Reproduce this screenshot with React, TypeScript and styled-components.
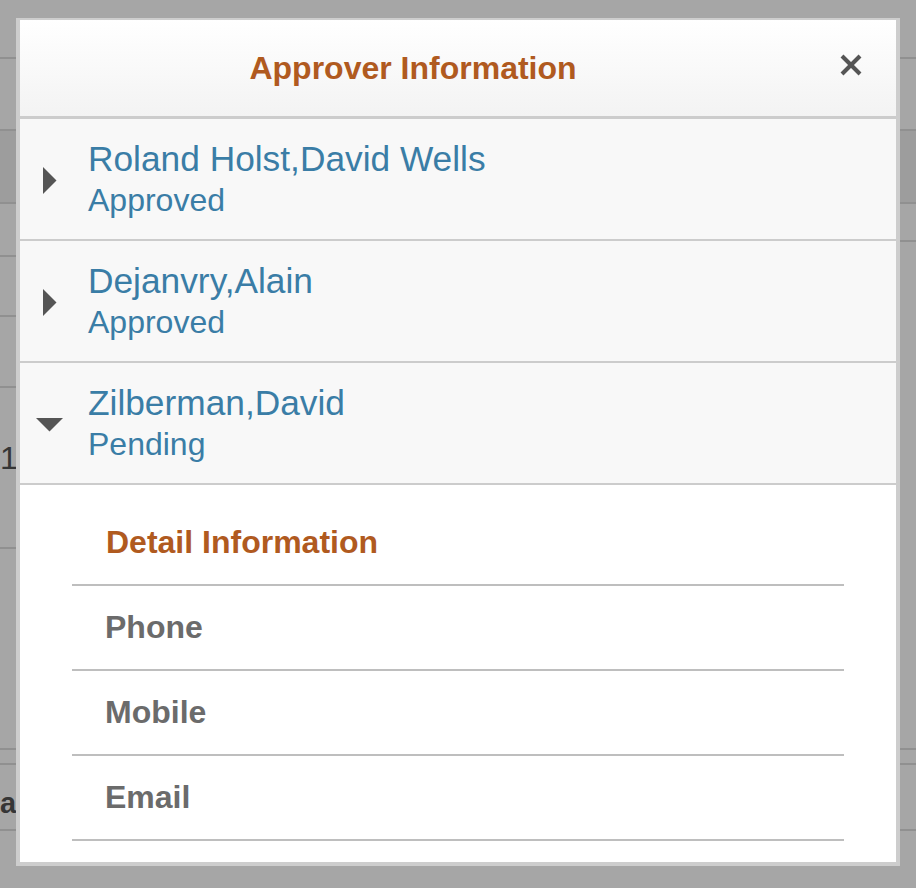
import React from "react";
import styled, { createGlobalStyle } from "styled-components";

const GlobalStyle = createGlobalStyle`
  html, body {
    margin: 0;
    padding: 0;
    background: #a6a6a6;
    font-family: "Liberation Sans", Arial, Helvetica, sans-serif;
  }
  * { box-sizing: border-box; }
`;

const Page = styled.div`
  position: relative;
  width: 916px;
  height: 888px;
  overflow: hidden;
  background: #a6a6a6;
`;

/* ---------- obscured page behind the overlay ---------- */
const Backdrop = styled.div`
  display: flex;
  flex-direction: column;
  width: 916px;
`;

const BgRow = styled.div<{ $h: number; $dark?: boolean; $noLine?: boolean; $pt?: number }>`
  height: ${(p) => p.$h}px;
  padding-top: ${(p) => p.$pt ?? 0}px;
  background: ${(p) => (p.$dark ? "#9d9d9d" : "transparent")};
  border-bottom: ${(p) => (p.$noLine ? "none" : "2px solid #909090")};
  display: flex;
  align-items: flex-start;
`;

const BgSplit = styled.div`
  display: grid;
  grid-template-columns: 458px 458px;
`;

const BgColumn = styled.div`
  display: flex;
  flex-direction: column;
`;

const BgCell = styled.div<{ $w: number; $bold?: boolean; $size: number }>`
  width: ${(p) => p.$w}px;
  text-align: right;
  white-space: nowrap;
  font-size: ${(p) => p.$size}px;
  line-height: 36px;
  font-weight: ${(p) => (p.$bold ? 700 : 400)};
  color: #363636;
`;

/* ---------- modal ---------- */
const Modal = styled.div`
  position: absolute;
  left: 16px;
  top: 18px;
  width: 884px;
  background: #ffffff;
  border-style: solid;
  border-color: #cdcdcd;
  border-width: 2px 4px 4px 4px;
  display: flex;
  flex-direction: column;
`;

const Header = styled.div`
  height: 99px;
  display: flex;
  align-items: center;
  background: linear-gradient(#ffffff, #f3f3f3);
  border-bottom: 3px solid #cccccc;
`;

const Title = styled.h1`
  flex: 1;
  margin: 0;
  text-align: center;
  font-size: 32px;
  line-height: 40px;
  font-weight: 700;
  color: #b05a1f;
`;

const CloseButton = styled.button`
  width: 90px;
  height: 40px;
  padding: 0 0 7px 0;
  border: none;
  background: transparent;
  display: flex;
  align-items: center;
  justify-content: center;
  cursor: pointer;
`;

const ApproverRow = styled.div`
  display: flex;
  align-items: center;
  padding: 19px 0 19px 16px;
  background: #f8f8f8;
  border-bottom: 2px solid #cccccc;
`;

const Toggle = styled.div`
  width: 27px;
  height: 27px;
  margin-right: 25px;
  margin-top: 3px;
  display: flex;
  align-items: center;
  justify-content: center;
`;

const ApproverText = styled.div`
  display: flex;
  flex-direction: column;
`;

const Name = styled.div`
  font-size: 35.3px;
  line-height: 42px;
  color: #3a7da6;
`;

const Status = styled.div`
  font-size: 32px;
  line-height: 40px;
  color: #3a7da6;
`;

const Detail = styled.div`
  padding: 37px 52px 21px 52px;
  background: #ffffff;
`;

const DetailHeading = styled.h2`
  margin: 0 0 22px 0;
  padding-left: 34px;
  font-size: 32px;
  line-height: 40px;
  font-weight: 700;
  color: #b05a1f;
`;

const FieldList = styled.div`
  border-top: 2px solid #bebebe;
  display: flex;
  flex-direction: column;
`;

const Field = styled.div`
  height: 85px;
  padding-left: 33px;
  border-bottom: 2px solid #bebebe;
  font-size: 32px;
  line-height: 83px;
  font-weight: 700;
  color: #6b6b6b;
`;

const RightTriangle = () => (
  <svg width="14" height="27" viewBox="0 0 14 27">
    <polygon points="0,0 13.5,13.5 0,27" fill="#555555" />
  </svg>
);

const DownTriangle = () => (
  <svg width="27" height="14" viewBox="0 0 27 14">
    <polygon points="0,0 27,0 13.5,13.5" fill="#555555" />
  </svg>
);

const CloseIcon = () => (
  <svg width="22" height="22" viewBox="0 0 22 22">
    <line x1="2" y1="2" x2="20" y2="20" stroke="#555555" strokeWidth="4" />
    <line x1="20" y1="2" x2="2" y2="20" stroke="#555555" strokeWidth="4" />
  </svg>
);

const approvers = [
  { name: "Roland Holst,David Wells", status: "Approved", open: false },
  { name: "Dejanvry,Alain", status: "Approved", open: false },
  { name: "Zilberman,David", status: "Pending", open: true },
];

export default function App() {
  return (
    <>
      <GlobalStyle />
      <Page>
        <Backdrop>
          <BgRow $h={59} />
          <BgRow $h={72} />
          <BgRow $h={73} $dark />
          <BgSplit>
            <BgColumn>
              <BgRow $h={53} />
              <BgRow $h={60} />
              <BgRow $h={71} />
              <BgRow $h={161} $pt={52}>
                <BgCell $w={16} $size={32}>1</BgCell>
              </BgRow>
              <BgRow $h={201} />
            </BgColumn>
            <BgColumn>
              <BgRow $h={38} />
              <BgRow $h={508} />
            </BgColumn>
          </BgSplit>
          <BgRow $h={15} />
          <BgRow $h={66} $pt={20}>
            <BgCell $w={15} $size={29} $bold>
              a
            </BgCell>
          </BgRow>
          <BgRow $h={57} $noLine />
        </Backdrop>

        <Modal>
          <Header>
            <Title>Approver Information</Title>
            <CloseButton aria-label="Close">
              <CloseIcon />
            </CloseButton>
          </Header>
          {approvers.map((a) => (
            <ApproverRow key={a.name}>
              <Toggle>{a.open ? <DownTriangle /> : <RightTriangle />}</Toggle>
              <ApproverText>
                <Name>{a.name}</Name>
                <Status>{a.status}</Status>
              </ApproverText>
            </ApproverRow>
          ))}
          <Detail>
            <DetailHeading>Detail Information</DetailHeading>
            <FieldList>
              <Field>Phone</Field>
              <Field>Mobile</Field>
              <Field>Email</Field>
            </FieldList>
          </Detail>
        </Modal>
      </Page>
    </>
  );
}
